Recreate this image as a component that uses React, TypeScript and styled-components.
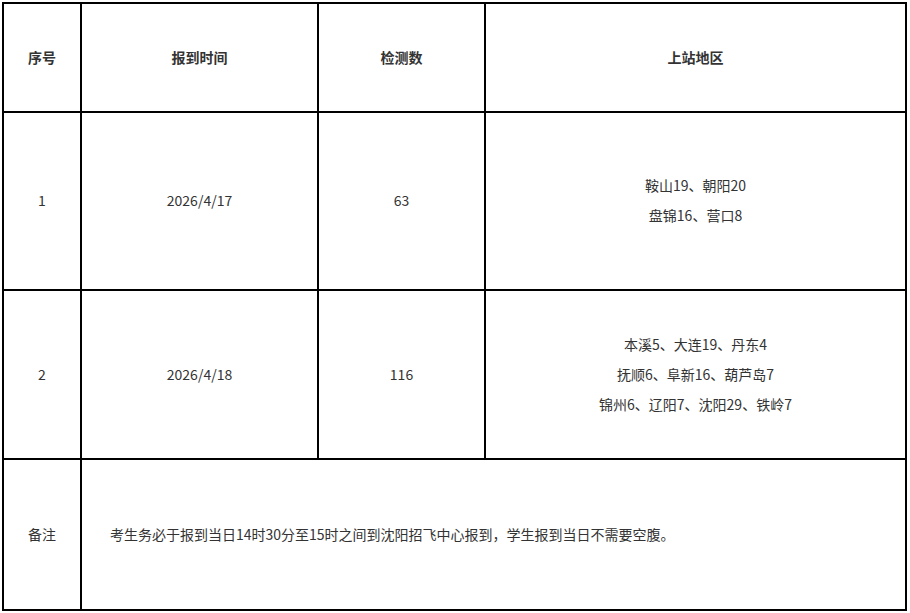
import React from "react"
import styled, { createGlobalStyle } from "styled-components"

const Global = createGlobalStyle`
    body{
        margin: 0;
        background: #fff;
        font-family: "Noto Sans CJK SC", "Noto Sans", sans-serif;
        color: #333;
        font-size: 14px;
    }
`
const Page = styled.div`
    padding: 2px;
`
const Table = styled.div`
    display: grid;
    grid-template-columns: 78px 237px 167px 421px;
    grid-template-rows: 109px 178px 169px 151px;
    width: max-content;
    border-left: 2px solid #000;
    border-top: 2px solid #000;
`
const Cell = styled.div<{ $head?: boolean; $span?: number; $left?: boolean }>`
    box-sizing: border-box;
    border-right: 2px solid #000;
    border-bottom: 2px solid #000;
    display: flex;
    flex-direction: column;
    justify-content: center;
    align-items: ${p => (p.$left ? "flex-start" : "center")};
    padding: 0 0 2px ${p => (p.$left ? "28px" : "0")};
    font-weight: ${p => (p.$head ? "bold" : "normal")};
    grid-column: ${p => (p.$span ? `span ${p.$span}` : "auto")};
    line-height: 30px;
    text-align: center;
`
const Line = styled.div`
    white-space: nowrap;
`

const rows = [
    { no: "1", date: "2026/4/17", count: "63", areas: ["鞍山19、朝阳20", "盘锦16、营口8"] },
    { no: "2", date: "2026/4/18", count: "116", areas: ["本溪5、大连19、丹东4", "抚顺6、阜新16、葫芦岛7", "锦州6、辽阳7、沈阳29、铁岭7"] },
]

export default function App() {
    return (
        <Page>
            <Global />
            <Table>
                <Cell $head>序号</Cell>
                <Cell $head>报到时间</Cell>
                <Cell $head>检测数</Cell>
                <Cell $head>上站地区</Cell>
                {rows.map(r => (
                    <React.Fragment key={r.no}>
                        <Cell>{r.no}</Cell>
                        <Cell>{r.date}</Cell>
                        <Cell>{r.count}</Cell>
                        <Cell>
                            {r.areas.map(a => <Line key={a}>{a}</Line>)}
                        </Cell>
                    </React.Fragment>
                ))}
                <Cell>备注</Cell>
                <Cell $span={3} $left>考生务必于报到当日14时30分至15时之间到沈阳招飞中心报到，学生报到当日不需要空腹。</Cell>
            </Table>
        </Page>
    )
}
